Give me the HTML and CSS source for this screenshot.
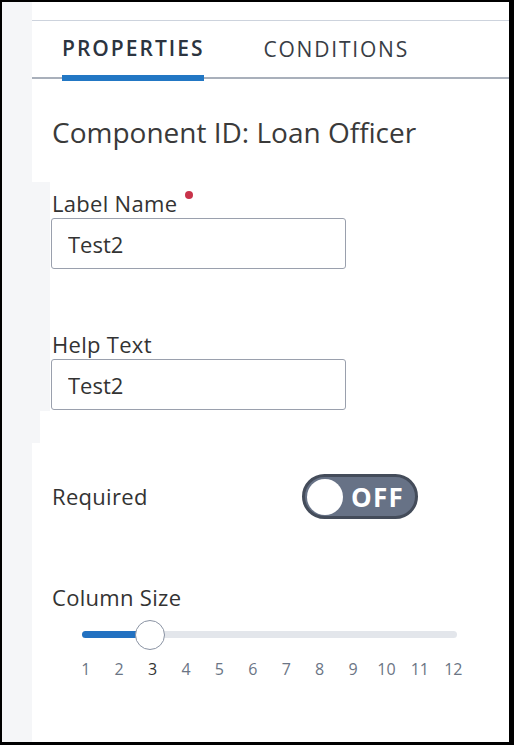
FILE: index.html
```html
<!DOCTYPE html>
<html lang="en">

<head>
    <meta charset="UTF-8">
    <meta name="viewport" content="width=device-width, initial-scale=1.0">
    <title>Component Properties</title>
    <link rel="stylesheet" href="styles.css">
</head>

<body>
    <div class="frame">
        <div class="rail"></div>
        <div class="panel">
            <div class="panelTop"></div>
            <div class="tabs">
                <div class="tab active">PROPERTIES</div>
                <div class="tab">CONDITIONS</div>
            </div>

            <div class="componentId">Component ID: Loan Officer</div>

            <div class="fields">
                <div class="field">
                    <label for="labelName">Label Name<span class="reqDot"></span></label>
                    <input id="labelName" type="text" value="Test2">
                </div>
                <div class="field second">
                    <label for="helpText">Help Text</label>
                    <input id="helpText" type="text" value="Test2">
                </div>
            </div>
            <div class="fieldsTail"></div>

            <div class="toggleRow">
                <div class="rowLabel">Required</div>
                <div class="toggle">
                    <div class="knob"></div>
                    <span class="toggleText">OFF</span>
                </div>
            </div>

            <div class="columnSize">
                <div class="rowLabel">Column Size</div>
                <div class="track">
                    <div class="fill" style="width: 68px;"></div>
                    <div class="thumb" style="left: 68px;"></div>
                </div>
                <div class="ticks">
                    <span>1</span><span>2</span><span class="current">3</span><span>4</span>
                    <span>5</span><span>6</span><span>7</span><span>8</span>
                    <span>9</span><span>10</span><span>11</span><span>12</span>
                </div>
            </div>
        </div>
    </div>
</body>

</html>
```

FILE: styles.css
```css
body {
    margin: 0;
    background-color: #000;
    font-family: "Open Sans", Lato, sans-serif;
    color: #333;
}

.frame {
    display: flex;
    margin: 2px 5px 0 2px;
    height: 740px;
    background-color: #fff;
}

.rail {
    width: 30px;
    background-color: #f5f6f8;
}

.panel {
    flex: 1;
}

.panelTop {
    height: 18px;
    border-bottom: 1px solid #cdd3dd;
}

.tabs {
    display: flex;
    height: 56px;
    padding-left: 30px;
    gap: 59px;
    border-bottom: 2px solid #a9b0bb;
}

.tab {
    display: flex;
    align-items: center;
    font-size: 21px;
    letter-spacing: 1.8px;
    color: #383d45;
}

.tab.active {
    font-weight: 600;
    letter-spacing: 2px;
    color: #2c3440;
    border-bottom: 6px solid #2277c4;
    margin-bottom: -4px;
}

.componentId {
    margin: 37px 0 0 20px;
    font-size: 28px;
    line-height: 32px;
    color: #3a3a3a;
}

.fields {
    margin-top: 34px;
    border-left: 18px solid #f5f6f8;
    padding-top: 8px;
    padding-bottom: 1px;
}

.fieldsTail {
    height: 32px;
    border-left: 8px solid #f5f6f8;
}

.field {
    display: flex;
    flex-direction: column;
    padding-left: 2px;
}

.field.second {
    margin-top: 62px;
}

.field label,
.rowLabel {
    font-size: 22px;
    line-height: 27px;
    letter-spacing: 0.3px;
    color: #333;
}

.reqDot {
    display: inline-block;
    width: 8px;
    height: 8px;
    margin-left: 8px;
    border-radius: 50%;
    background-color: #c8334a;
    vertical-align: 13px;
}

.field input {
    box-sizing: border-box;
    width: 295px;
    height: 51px;
    margin-top: 1px;
    margin-left: -1px;
    padding: 0 16px;
    border: 1.5px solid #9aa0ad;
    border-radius: 3px;
    font-family: inherit;
    font-size: 22px;
    color: #333;
}

.toggleRow {
    display: flex;
    align-items: center;
    margin-top: 31px;
    padding-left: 20px;
}

.toggleRow .rowLabel {
    width: 250px;
}

.toggle {
    box-sizing: border-box;
    display: flex;
    align-items: center;
    width: 116px;
    height: 45px;
    padding: 0 2px;
    border: 3px solid #444c5a;
    border-radius: 23px;
    background-color: #677286;
}

.knob {
    width: 36px;
    height: 36px;
    border-radius: 50%;
    background-color: #fff;
}

.toggleText {
    margin-left: 8px;
    font-size: 26px;
    font-weight: 700;
    letter-spacing: 1.3px;
    color: #fff;
}

.columnSize {
    margin-top: 65px;
    padding-left: 20px;
}

.track {
    position: relative;
    width: 375px;
    height: 7px;
    margin: 20px 0 0 30px;
    border-radius: 4px;
    background-color: #e3e6eb;
}

.fill {
    height: 100%;
    border-radius: 4px;
    background-color: #2271c1;
}

.thumb {
    position: absolute;
    top: 50%;
    box-sizing: border-box;
    width: 30px;
    height: 30px;
    margin: -15px 0 0 -15px;
    border: 1.5px solid #8a93a3;
    border-radius: 50%;
    background-color: #fff;
}

.ticks {
    display: grid;
    grid-template-columns: repeat(12, 1fr);
    width: 401px;
    margin: 20px 0 0 17px;
    font-size: 16px;
    line-height: 22px;
    color: #6b7585;
    text-align: center;
}

.ticks .current {
    color: #333;
}
```
